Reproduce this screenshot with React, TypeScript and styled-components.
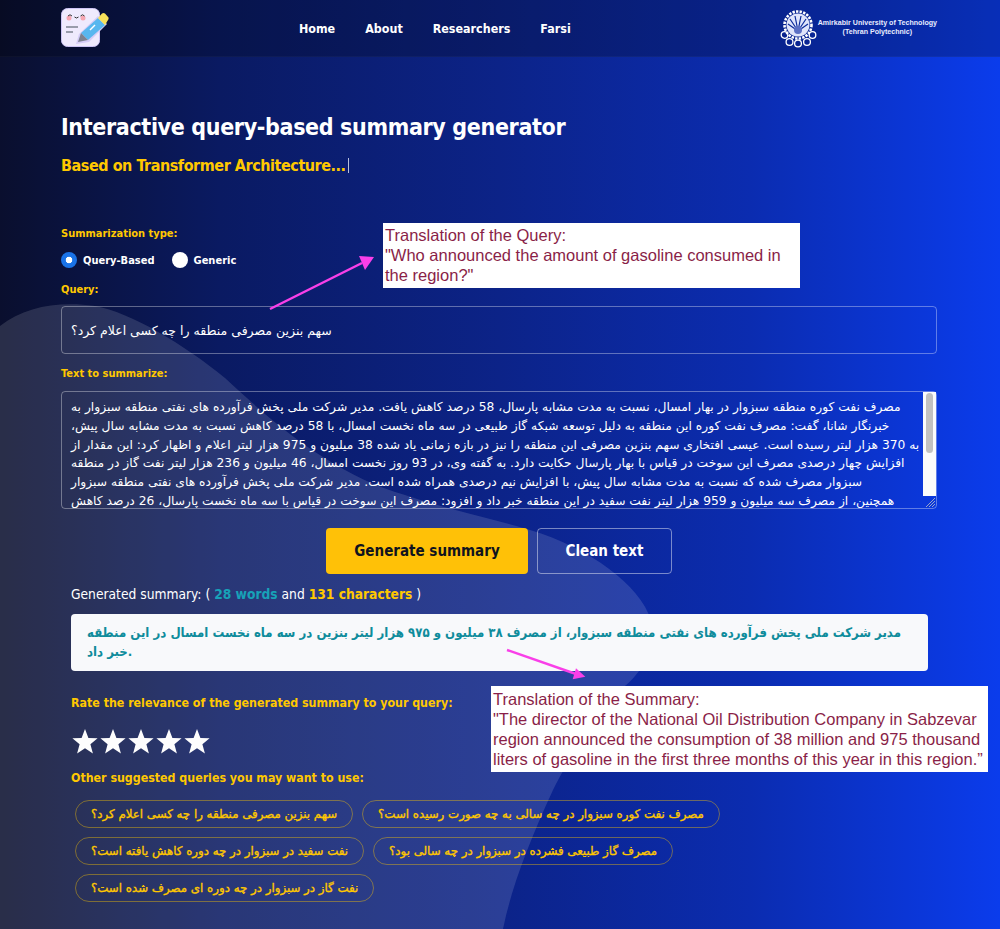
import React from "react";
import styled, { createGlobalStyle } from "styled-components";

const GlobalStyle = createGlobalStyle`
    html, body {
        margin: 0;
        padding: 0;
    }
    body {
        font-family: "DejaVu Sans Condensed", "DejaVu Sans", sans-serif;
        font-stretch: condensed;
        background: #0a1a66;
    }
`;

const Page = styled.div`
    position: relative;
    width: 1000px;
    height: 929px;
    overflow: hidden;
    color: #fff;
    background: linear-gradient(90deg, #0a0f2e 0%, #0a1a62 22%, #0c2388 50%, #0b2cb0 75%, #0b3cec 100%);
`;

const Blob = styled.svg`
    position: absolute;
    inset: 0;
    pointer-events: none;
`;

const Header = styled.header`
    position: relative;
    height: 57px;
    box-sizing: border-box;
    padding: 0 63px 0 61px;
    display: flex;
    align-items: center;
    background: rgba(0, 0, 0, 0.22);
    border-bottom: 1px solid rgba(255, 255, 255, 0.03);
`;

const Nav = styled.nav`
    display: flex;
    gap: 30px;
    margin-left: 190px;
`;

const NavLink = styled.a`
    color: #fff;
    font-size: 12.4px;
    font-weight: 700;
    text-decoration: none;
`;

const Uni = styled.div`
    margin-left: auto;
    display: flex;
    align-items: center;
    gap: 1px;
`;

const UniName = styled.div`
    font-family: "Liberation Sans", sans-serif;
    font-size: 7.1px;
    font-weight: 700;
    line-height: 9px;
    text-align: center;
    color: #e8ecff;
`;

const Main = styled.main`
    position: relative;
    padding: 55px 63px 0 61px;
    display: flex;
    flex-direction: column;
`;

const Title = styled.h1`
    margin: 0;
    font-size: 23px;
    line-height: 30px;
    font-weight: 700;
    letter-spacing: -0.35px;
`;

const Subtitle = styled.h2`
    margin: 12px 0 0;
    font-size: 16px;
    line-height: 24px;
    font-weight: 700;
    letter-spacing: -0.45px;
    color: #ffc800;
`;

const Caret = styled.span`
    display: inline-block;
    width: 1px;
    height: 15px;
    margin-left: 2px;
    vertical-align: -2px;
    background: #b9c0dc;
`;

const Label = styled.label<{ $top: number }>`
    display: block;
    margin-top: ${(p) => p.$top}px;
    font-size: 11px;
    line-height: 16px;
    font-weight: 700;
    color: #ffc800;
`;

const RadioRow = styled.div`
    display: flex;
    align-items: center;
    margin-top: 8px;
    height: 20px;
`;

const RadioLabel = styled.label`
    display: flex;
    align-items: center;
    gap: 6px;
    margin-right: 17px;
    font-size: 11px;
    font-weight: 700;
`;

const RadioInput = styled.input`
    appearance: none;
    width: 16px;
    height: 16px;
    margin: 0;
    border-radius: 50%;
    background: #fff;
    &:checked {
        background: radial-gradient(circle, #fff 0 3px, #1a73e8 3.6px);
    }
`;

const QueryInput = styled.input`
    display: block;
    box-sizing: border-box;
    width: 876px;
    height: 48px;
    margin-top: 8px;
    padding: 0 9px;
    border: 1px solid rgba(255, 255, 255, 0.35);
    border-radius: 4px;
    background: transparent;
    color: #fff;
    font-family: "DejaVu Sans", sans-serif;
    font-size: 12.5px;
    unicode-bidi: plaintext;
    text-align: left;
    outline: none;
`;

const SourceWrap = styled.div`
    position: relative;
    width: 876px;
    height: 118px;
    margin-top: 9px;
`;

const SourceText = styled.textarea`
    display: block;
    box-sizing: border-box;
    width: 100%;
    height: 100%;
    padding: 6px 9px;
    border: 1px solid rgba(255, 255, 255, 0.35);
    border-radius: 4px;
    background: transparent;
    color: #fff;
    font-family: "DejaVu Sans", sans-serif;
    font-size: 12.27px;
    line-height: 18.8px;
    white-space: pre;
    unicode-bidi: plaintext;
    text-align: left;
    outline: none;
    overflow: hidden;
    resize: none;
`;

const ScrollTrack = styled.div`
    position: absolute;
    top: 1px;
    right: 1px;
    bottom: 13px;
    width: 13px;
    background: #fbfbfb;
`;

const ScrollThumb = styled.div`
    position: absolute;
    top: 1px;
    left: 3px;
    width: 7px;
    height: 60px;
    border-radius: 4px;
    background: #c1c1c1;
`;

const Grip = styled.svg`
    position: absolute;
    right: 1px;
    bottom: 1px;
`;

const Actions = styled.div`
    display: flex;
    justify-content: flex-start;
    gap: 9px;
    margin: 19px 0 0 265px;
`;

const GenerateButton = styled.button`
    width: 202px;
    height: 46px;
    border: none;
    border-radius: 4px;
    background: #ffc107;
    color: #10131f;
    font-family: inherit;
    font-stretch: condensed;
    font-size: 15px;
    font-weight: 700;
`;

const CleanButton = styled.button`
    width: 135px;
    height: 46px;
    border: 1px solid rgba(255, 255, 255, 0.45);
    border-radius: 4px;
    background: transparent;
    color: #fff;
    font-family: inherit;
    font-stretch: condensed;
    font-size: 15px;
    font-weight: 700;
`;

const Result = styled.section`
    padding-left: 10px;
    display: flex;
    flex-direction: column;
`;

const SummaryHead = styled.div`
    margin-top: 10px;
    font-size: 13.7px;
    line-height: 20px;
`;

const Count = styled.b<{ $color: string }>`
    color: ${(p) => p.$color};
`;

const SummaryBox = styled.div`
    box-sizing: border-box;
    width: 857px;
    height: 57px;
    margin-top: 10px;
    padding: 9px 16px;
    border-radius: 4px;
    background: #f8f9fb;
    color: #0f8c9c;
    font-family: "DejaVu Sans", sans-serif;
    font-size: 13.1px;
    line-height: 19px;
    font-weight: 700;
`;

const Heading = styled.div<{ $top: number }>`
    margin-top: ${(p) => p.$top}px;
    font-size: 12.3px;
    line-height: 18px;
    font-weight: 700;
    color: #ffc800;
`;

const Stars = styled.div`
    display: flex;
    margin-top: 16px;
    height: 27px;
`;

const Chips = styled.div`
    display: flex;
    flex-wrap: wrap;
    gap: 9px;
    width: 680px;
    margin: 13px 0 0 4px;
`;

const Chip = styled.button`
    height: 28px;
    padding: 0 15px;
    border: 1px solid rgba(255, 200, 0, 0.4);
    border-radius: 14px;
    background: transparent;
    color: #ffc800;
    font-family: "DejaVu Sans", sans-serif;
    font-size: 11.8px;
    font-weight: 400;
    -webkit-text-stroke: 0.35px #ffc800;
    unicode-bidi: plaintext;
`;

const Note = styled.div<{ $left: number; $top: number; $width: number; $height: number; $pad: number }>`
    position: absolute;
    left: ${(p) => p.$left}px;
    top: ${(p) => p.$top}px;
    width: ${(p) => p.$width}px;
    height: ${(p) => p.$height}px;
    box-sizing: border-box;
    padding: ${(p) => p.$pad}px 2px;
    background: #fff;
    color: #8a1f48;
    font-family: "Liberation Sans", sans-serif;
    font-size: 16.5px;
    line-height: 20px;
`;

const Arrows = styled.svg`
    position: absolute;
    inset: 0;
    pointer-events: none;
`;

const sourceText = [
    "مصرف نفت کوره منطقه سبزوار در بهار امسال، نسبت به مدت مشابه پارسال، 58 درصد کاهش یافت. مدیر شرکت ملی پخش فرآورده های نفتی منطقه سبزوار به",
    "خبرنگار شانا، گفت: مصرف نفت کوره این منطقه به دلیل توسعه شبکه گاز طبیعی در سه ماه نخست امسال، با 58 درصد کاهش نسبت به مدت مشابه سال پیش،",
    "به 370 هزار لیتر رسیده است. عیسی افتخاری سهم بنزین مصرفی این منطقه را نیز در بازه زمانی یاد شده 38 میلیون و 975 هزار لیتر اعلام و اظهار کرد: این مقدار از",
    "افزایش چهار درصدی مصرف این سوخت در قیاس با بهار پارسال حکایت دارد. به گفته وی، در 93 روز نخست امسال، 46 میلیون و 236 هزار لیتر نفت گاز در منطقه",
    "سبزوار مصرف شده که نسبت به مدت مشابه سال پیش، با افزایش نیم درصدی همراه شده است. مدیر شرکت ملی پخش فرآورده های نفتی منطقه سبزوار",
    "همچنین، از مصرف سه میلیون و 959 هزار لیتر نفت سفید در این منطقه خبر داد و افزود: مصرف این سوخت در قیاس با سه ماه نخست پارسال، 26 درصد کاهش",
].join("\n");

const suggestions = [
    "سهم بنزین مصرفی منطقه را چه کسی اعلام کرد؟",
    "مصرف نفت کوره سبزوار در چه سالی به چه صورت رسیده است؟",
    "نفت سفید در سبزوار در چه دوره کاهش یافته است؟",
    "مصرف گاز طبیعی فشرده در سبزوار در چه سالی بود؟",
    "نفت گاز در سبزوار در چه دوره ای مصرف شده است؟",
];

const Logo = () => (
    <svg width="48" height="40" viewBox="0 0 48 40">
        <rect x="0.5" y="0.5" width="38" height="38" rx="6" fill="#efeafd" stroke="#cdc4f4" />
        <circle cx="8" cy="10" r="2.5" fill="#f6a6b2" />
        <circle cx="22" cy="10" r="2.5" fill="#f6a6b2" />
        <path d="M7 8q2-2.5 4 0M19.5 8q2-2.5 4 0M13.5 9q2 2 4 0" fill="none" stroke="#333" strokeWidth="1" />
        <path d="M5 19h12M5 24h7" stroke="#7d8290" strokeWidth="1.4" />
        <path d="M37 8 L18 26 L15 36 L28 34 L46 16 Z" fill="#d6cdf7" />
        <path d="M37 10 L20 25 L27 32 L44 17 Z" fill="#58b7ef" />
        <path d="M20 25 L17 34 L27 32 Z" fill="#7d8290" />
        <path d="M37 10 L41 5.5 Q42.5 4.5 44 5.5 L47.5 9.5 Q48 11 47 12 L44 17 Z" fill="#f7e15a" />
        <path d="M29 22l5-5" stroke="#fff" strokeWidth="1.4" />
    </svg>
);

const UniLogo = () => (
    <svg width="37" height="39" viewBox="0 0 37 39">
        <circle cx="18" cy="16" r="13.5" fill="none" stroke="#fff" strokeWidth="2.6" strokeDasharray="2.4 1.2" />
        <circle cx="18" cy="16" r="11.5" fill="#dfe4fa" />
        <path d="M18 22 L8 15 M18 22 L10 10 M18 22 L15 7 M18 22 L21 7 M18 22 L26 10 M18 22 L28 15" stroke="#0a2a9a" strokeWidth="1.2" />
        <circle cx="18" cy="21" r="4" fill="#5b6fc4" />
        <g fill="none" stroke="#fff" strokeWidth="1.3">
            <circle cx="4.5" cy="26" r="3.3" />
            <circle cx="9.5" cy="33" r="3.4" />
            <circle cx="18" cy="34.5" r="3.4" />
            <circle cx="27" cy="33" r="3.4" />
            <circle cx="32.5" cy="26" r="3.3" />
        </g>
    </svg>
);

const Star = () => (
    <svg width="28" height="27" viewBox="0 0 28 27">
        <polygon
            points="14,1 17.4,10 26.6,10.3 19.4,16.2 21.9,25.5 14,20.2 6.1,25.5 8.6,16.2 1.4,10.3 10.6,10"
            fill="#fdfdfd"
        />
    </svg>
);

const App: React.FC = () => {
    return (
        <Page>
            <GlobalStyle />
            <Blob width="1000" height="929" viewBox="0 0 1000 929">
                <path
                    d="M0 326 C25 306 60 301 95 306 C130 312 185 345 225 378 C275 425 335 475 405 495 C450 510 490 518 530 530 C590 548 640 585 651 620 C658 650 640 675 620 690 C590 725 565 765 553 790 C530 840 512 885 503 929 L0 929 Z"
                    fill="#fff"
                    fillOpacity="0.13"
                />
            </Blob>
            <Header>
                <Logo />
                <Nav>
                    <NavLink href="#">Home</NavLink>
                    <NavLink href="#">About</NavLink>
                    <NavLink href="#">Researchers</NavLink>
                    <NavLink href="#">Farsi</NavLink>
                </Nav>
                <Uni>
                    <UniLogo />
                    <UniName>
                        Amirkabir University of Technology
                        <br />
                        (Tehran Polytechnic)
                    </UniName>
                </Uni>
            </Header>
            <Main>
                <Title>Interactive query-based summary generator</Title>
                <Subtitle>
                    Based on Transformer Architecture...
                    <Caret />
                </Subtitle>
                <Label $top={48}>Summarization type:</Label>
                <RadioRow>
                    <RadioLabel>
                        <RadioInput type="radio" name="kind" defaultChecked />
                        Query-Based
                    </RadioLabel>
                    <RadioLabel>
                        <RadioInput type="radio" name="kind" />
                        Generic
                    </RadioLabel>
                </RadioRow>
                <Label $top={12}>Query:</Label>
                <QueryInput readOnly value="سهم بنزین مصرفی منطقه را چه کسی اعلام کرد؟" />
                <Label $top={12}>Text to summarize:</Label>
                <SourceWrap>
                    <SourceText readOnly value={sourceText} />
                    <ScrollTrack>
                        <ScrollThumb />
                    </ScrollTrack>
                    <Grip width="12" height="12" viewBox="0 0 12 12">
                        <path d="M11 2L2 11M11 5L5 11M11 8L8 11" stroke="#9aa4c8" strokeWidth="1" />
                    </Grip>
                </SourceWrap>
                <Actions>
                    <GenerateButton>Generate summary</GenerateButton>
                    <CleanButton>Clean text</CleanButton>
                </Actions>
                <Result>
                    <SummaryHead>
                        Generated summary: ( <Count $color="#17a2b8">28 words</Count> and{" "}
                        <Count $color="#ffc800">131 characters</Count> )
                    </SummaryHead>
                    <SummaryBox>
                        مدیر شرکت ملی پخش فرآورده های نفتی منطقه سبزوار، از مصرف ۳۸ میلیون و ۹۷۵ هزار لیتر بنزین در سه ماه نخست امسال در این منطقه
                        <br />
                        خبر داد.
                    </SummaryBox>
                    <Heading $top={23}>Rate the relevance of the generated summary to your query:</Heading>
                    <Stars>
                        <Star />
                        <Star />
                        <Star />
                        <Star />
                        <Star />
                    </Stars>
                    <Heading $top={14}>Other suggested queries you may want to use:</Heading>
                    <Chips>
                        {suggestions.map((text) => (
                            <Chip key={text}>{text}</Chip>
                        ))}
                    </Chips>
                </Result>
            </Main>
            <Arrows width="1000" height="929" viewBox="0 0 1000 929">
                <path d="M270 309 L362 263" stroke="#f93fe8" strokeWidth="2.4" />
                <polygon points="374,257 359,256 365,270" fill="#f93fe8" />
                <path d="M507 650 L576 674" stroke="#f93fe8" strokeWidth="2.4" />
                <polygon points="585.3,676.7 572.7,679.3 576,668.3" fill="#f93fe8" />
            </Arrows>
            <Note $left={383} $top={223} $width={417} $height={65} $pad={2}>
                Translation of the Query:
                <br />
                "Who announced the amount of gasoline consumed in the region?"
            </Note>
            <Note $left={491} $top={686} $width={497} $height={86} $pad={3}>
                Translation of the Summary:
                <br />
                "The director of the National Oil Distribution Company in Sabzevar region announced the consumption of 38 million and 975 thousand liters of gasoline in the first three months of this year in this region.”
            </Note>
        </Page>
    );
};

export default App;
